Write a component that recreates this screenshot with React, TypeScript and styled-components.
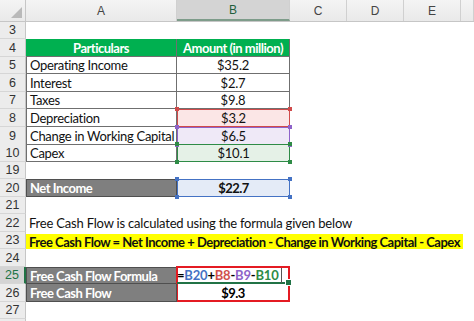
import React from 'react';
import styled, {createGlobalStyle, css} from 'styled-components';

const COLS = '26px 151px 113px 57px 57px 57px 1fr';
const CELL_FONT = 'Lato, "Liberation Sans", sans-serif';
const GRID_DARK = '#6f6f6f';

const GlobalStyle = createGlobalStyle`
  html, body {
    margin: 0;
    padding: 0;
    background: #ffffff;
  }
  body {
    font-family: ${CELL_FONT};
  }
`;

const Sheet = styled.div`
  width: 474px;
  height: 321px;
  overflow: hidden;
  background: #ffffff;
`;

const HeaderRow = styled.div`
  display: grid;
  grid-template-columns: ${COLS};
  height: 22px;
  background: linear-gradient(#f4f4f4, #e9e9e9);
  border-bottom: 1px solid #c6c6c6;
  box-sizing: border-box;
`;

const Corner = styled.div`
  position: relative;
  border-right: 1px solid #c6c6c6;
  svg {
    position: absolute;
    right: 3px;
    bottom: 3px;
  }
`;

const ColHead = styled.div<{$active?: boolean}>`
  display: flex;
  align-items: center;
  justify-content: center;
  font-family: "Liberation Sans", sans-serif;
  font-size: 12px;
  color: #444444;
  border-right: 1px solid #d0d0d0;
  ${p => p.$active && css`
    background: #d4d4d4;
    color: #1f5f3c;
    border-bottom: 2px solid #7e9c8a;
  `}
`;

const Row = styled.div<{$h: number}>`
  display: grid;
  grid-template-columns: ${COLS};
  height: ${p => p.$h}px;
`;

const RowHead = styled.div<{$active?: boolean}>`
  display: flex;
  align-items: center;
  justify-content: center;
  font-family: "Liberation Sans", sans-serif;
  font-size: 12.5px;
  color: #333333;
  background: #ececec;
  border-right: 1px solid #c6c6c6;
  border-bottom: 1px solid #d6d6d6;
  box-sizing: border-box;
  ${p => p.$active && css`
    background: #d4d4d4;
    color: #217346;
    border-right: 2px solid #217346;
  `}
`;

const BaseCell = styled.div`
  position: relative;
  display: flex;
  align-items: center;
  box-sizing: border-box;
  padding: 0 3px;
  font-size: 13px;
  letter-spacing: -0.2px;
  color: #111111;
  white-space: nowrap;
`;

const boldText = css`
  font-weight: 700;
  letter-spacing: -0.5px;
`;

const HeadCell = styled(BaseCell)`
  justify-content: center;
  background: #00b050;
  color: #ffffff;
  ${boldText};
  border-right: 1px solid ${GRID_DARK};
  border-bottom: 1px solid ${GRID_DARK};
`;

const LabelCell = styled(BaseCell)`
  letter-spacing: -0.3px;
  border-left: 1px solid ${GRID_DARK};
  border-right: 1px solid ${GRID_DARK};
  border-bottom: 1px solid ${GRID_DARK};
`;

const ValueCell = styled(BaseCell)`
  justify-content: center;
  border-right: 1px solid ${GRID_DARK};
  border-bottom: 1px solid ${GRID_DARK};
`;

const RefCell = styled(BaseCell)<{$tone: string; $tint: string; $bold?: boolean}>`
  justify-content: center;
  background: ${p => p.$tint};
  border: 1px solid ${p => p.$tone};
  ${p => p.$bold && boldText};
`;

const Handle = styled.span<{$tone: string; $v: 'top' | 'bottom'; $h: 'left' | 'right'}>`
  position: absolute;
  width: 4px;
  height: 4px;
  background: ${p => p.$tone};
  ${p => p.$v}: -3px;
  ${p => p.$h}: -3px;
  z-index: 2;
`;

const DarkCell = styled(BaseCell)<{$top?: boolean}>`
  background: #7f7f7f;
  color: #ffffff;
  ${boldText};
  border: 1px solid #4f4f4f;
  border-top: ${p => (p.$top ? '1px solid #4f4f4f' : 'none')};
  overflow: hidden;
`;

const FormulaBox = styled.div`
  grid-column: 3;
  grid-row: 1 / span 2;
  display: grid;
  grid-template-rows: 16px 18px;
  border: 2px solid #e41b23;
  margin: -1px 0 0 -1px;
  box-sizing: border-box;
  position: relative;
`;

const FormulaCell = styled.div`
  position: relative;
  display: flex;
  align-items: center;
  font-size: 13px;
  font-weight: 700;
  letter-spacing: -0.2px;
  margin-left: -1px;
  border-bottom: 2px solid #217346;
  white-space: nowrap;
  &::after {
    content: '';
    position: absolute;
    right: -4px;
    bottom: -4px;
    width: 5px;
    height: 5px;
    background: #217346;
    border: 1px solid #ffffff;
  }
`;

const Ref = styled.span<{$tone: string}>`
  color: ${p => p.$tone};
`;

const Caret = styled.span`
  display: inline-block;
  width: 1px;
  height: 15px;
  margin-left: 2px;
  background: #555555;
`;

const ResultCell = styled.div`
  display: flex;
  align-items: center;
  justify-content: center;
  font-size: 13px;
  ${boldText};
`;

const NoteCell = styled(BaseCell)`
  grid-column: 2 / -1;
`;

const Highlight = styled.span`
  display: flex;
  align-items: center;
  height: 15px;
  margin: 2px 0 0 -3px;
  padding: 0 3px;
  background: #ffff00;
  ${boldText};
`;

const Block = styled.div`
  display: grid;
  grid-template-columns: ${COLS};
  grid-template-rows: 17px 18px;
`;

const Handles = ({tone}: {tone: string}) => (
  <>
    <Handle $tone={tone} $v="top" $h="left"/>
    <Handle $tone={tone} $v="top" $h="right"/>
    <Handle $tone={tone} $v="bottom" $h="left"/>
    <Handle $tone={tone} $v="bottom" $h="right"/>
  </>
);

const h = (i: number) => (i % 2 === 0 ? 17 : 18);

const BLUE = '#4472c4';
const RED = '#d0504c';
const PURPLE = '#8e63c9';
const GREEN = '#2e8b46';

const items = [
  {label: 'Operating Income', value: '$35.2'},
  {label: 'Interest', value: '$2.7'},
  {label: 'Taxes', value: '$9.8'},
];

const refs = [
  {label: 'Depreciation', value: '$3.2', tone: '#d04a4a', tint: '#fbe6e6'},
  {label: 'Change in Working Capital', value: '$6.5', tone: PURPLE, tint: '#efe9f7'},
  {label: 'Capex', value: '$10.1', tone: GREEN, tint: '#e5f1e7'},
];

export default function App()
{
  return (
    <Sheet>
      <GlobalStyle/>
      <HeaderRow>
        <Corner>
          <svg width="11" height="11" viewBox="0 0 11 11">
            <polygon points="11,0 11,11 0,11" fill="#b9b9b9"/>
          </svg>
        </Corner>
        <ColHead>A</ColHead>
        <ColHead $active>B</ColHead>
        <ColHead>C</ColHead>
        <ColHead>D</ColHead>
        <ColHead>E</ColHead>
        <ColHead/>
      </HeaderRow>

      <Row $h={h(0)}><RowHead>3</RowHead></Row>
      <Row $h={h(1)}>
        <RowHead>4</RowHead>
        <HeadCell>Particulars</HeadCell>
        <HeadCell>Amount (in million)</HeadCell>
      </Row>
      {items.map((it, i) => (
        <Row key={it.label} $h={h(i + 2)}>
          <RowHead>{i + 5}</RowHead>
          <LabelCell>{it.label}</LabelCell>
          <ValueCell>{it.value}</ValueCell>
        </Row>
      ))}
      {refs.map((it, i) => (
        <Row key={it.label} $h={h(i + 5)}>
          <RowHead>{i + 8}</RowHead>
          <LabelCell>{it.label}</LabelCell>
          <RefCell $tone={it.tone} $tint={it.tint}>
            {it.value}
            <Handles tone={it.tone}/>
          </RefCell>
        </Row>
      ))}
      <Row $h={h(8)}><RowHead>19</RowHead></Row>
      <Row $h={h(9)}>
        <RowHead>20</RowHead>
        <DarkCell $top>Net Income</DarkCell>
        <RefCell $tone={BLUE} $tint="#e4ebf7" $bold>
          $22.7
          <Handles tone={BLUE}/>
        </RefCell>
      </Row>
      <Row $h={h(10)}><RowHead>21</RowHead></Row>
      <Row $h={h(11)}>
        <RowHead>22</RowHead>
        <NoteCell>Free Cash Flow is calculated using the formula given below</NoteCell>
      </Row>
      <Row $h={h(12)}>
        <RowHead>23</RowHead>
        <NoteCell>
          <Highlight>Free Cash Flow = Net Income + Depreciation - Change in Working Capital - Capex</Highlight>
        </NoteCell>
      </Row>
      <Row $h={h(13)}><RowHead>24</RowHead></Row>
      <Block>
        <RowHead $active>25</RowHead>
        <DarkCell $top>Free Cash Flow Formula</DarkCell>
        <FormulaBox>
          <FormulaCell>
            =<Ref $tone={BLUE}>B20</Ref>+<Ref $tone={RED}>B8</Ref>-<Ref $tone={PURPLE}>B9</Ref>-<Ref $tone={GREEN}>B10</Ref>
            <Caret/>
          </FormulaCell>
          <ResultCell>$9.3</ResultCell>
        </FormulaBox>
        <RowHead style={{gridColumn: 1, gridRow: 2}}>26</RowHead>
        <DarkCell style={{gridColumn: 2, gridRow: 2}}>Free Cash Flow</DarkCell>
      </Block>
      <Row $h={h(16)}><RowHead>27</RowHead></Row>
      <Row $h={h(17)}><RowHead/></Row>
    </Sheet>
  );
}
